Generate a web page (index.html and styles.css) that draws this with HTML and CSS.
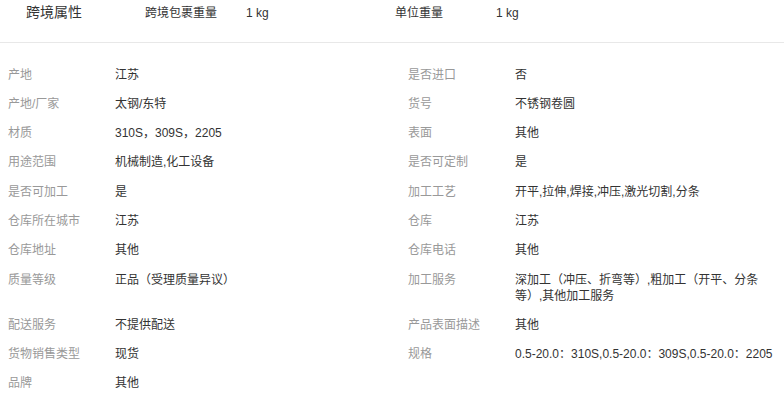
FILE: index.html
```html
<!DOCTYPE html>
<html lang="zh-CN">
<head>
    <meta charset="UTF-8">
    <meta name="viewport" content="width=device-width, initial-scale=1.0">
    <title>商品属性</title>
    <link rel="stylesheet" href="styles.css">
</head>
<body>

    <!-- 跨境属性 -->
    <div class="cross-border">
        <div class="cb-title">跨境属性</div>
        <div class="cb-item">
            <span class="cb-label">跨境包裹重量</span>
            <span class="cb-value">1 kg</span>
        </div>
        <div class="cb-item">
            <span class="cb-label">单位重量</span>
            <span class="cb-value">1 kg</span>
        </div>
    </div>

    <!-- 商品属性列表 -->
    <div class="attr-list">
        <div class="attr"><span class="attr-name">产地</span><span class="attr-value">江苏</span></div>
        <div class="attr"><span class="attr-name">是否进口</span><span class="attr-value">否</span></div>

        <div class="attr"><span class="attr-name">产地/厂家</span><span class="attr-value">太钢/东特</span></div>
        <div class="attr"><span class="attr-name">货号</span><span class="attr-value">不锈钢卷圆</span></div>

        <div class="attr"><span class="attr-name">材质</span><span class="attr-value">310S，309S，2205</span></div>
        <div class="attr"><span class="attr-name">表面</span><span class="attr-value">其他</span></div>

        <div class="attr"><span class="attr-name">用途范围</span><span class="attr-value">机械制造,化工设备</span></div>
        <div class="attr"><span class="attr-name">是否可定制</span><span class="attr-value">是</span></div>

        <div class="attr"><span class="attr-name">是否可加工</span><span class="attr-value">是</span></div>
        <div class="attr"><span class="attr-name">加工工艺</span><span class="attr-value">开平,拉伸,焊接,冲压,激光切割,分条</span></div>

        <div class="attr"><span class="attr-name">仓库所在城市</span><span class="attr-value">江苏</span></div>
        <div class="attr"><span class="attr-name">仓库</span><span class="attr-value">江苏</span></div>

        <div class="attr"><span class="attr-name">仓库地址</span><span class="attr-value">其他</span></div>
        <div class="attr"><span class="attr-name">仓库电话</span><span class="attr-value">其他</span></div>

        <div class="attr"><span class="attr-name">质量等级</span><span class="attr-value">正品（受理质量异议）</span></div>
        <div class="attr"><span class="attr-name">加工服务</span><span class="attr-value">深加工（冲压、折弯等）,粗加工（开平、分条等）,其他加工服务</span></div>

        <div class="attr"><span class="attr-name">配送服务</span><span class="attr-value">不提供配送</span></div>
        <div class="attr"><span class="attr-name">产品表面描述</span><span class="attr-value">其他</span></div>

        <div class="attr"><span class="attr-name">货物销售类型</span><span class="attr-value">现货</span></div>
        <div class="attr"><span class="attr-name">规格</span><span class="attr-value">0.5-20.0：310S,0.5-20.0：309S,0.5-20.0：2205</span></div>

        <div class="attr"><span class="attr-name">品牌</span><span class="attr-value">其他</span></div>
    </div>

</body>
</html>
```

FILE: styles.css
```css
body {
    font-family: "Liberation Sans", "Noto Sans CJK SC", sans-serif;
    font-size: 12px;
    color: #333;
    background-color: #fff;
    margin: 0;
}

.cross-border {
    display: flex;
    height: 43px;
    padding: 4px 0 0 26px;
    box-sizing: border-box;
    border-bottom: 1px solid #e8e8e8;
}

.cb-title {
    width: 119px;
    font-size: 14px;
    line-height: 16px;
}

.cb-item {
    display: flex;
    width: 250px;
    line-height: 16px;
    padding-top: 1px;
}

.cb-label {
    width: 101px;
}

.attr-list {
    display: grid;
    grid-template-columns: 400px 1fr;
    padding: 17px 0 0 8px;
}

.attr {
    display: grid;
    grid-template-columns: 107px 1fr;
    padding: 6.65px 8px 6.65px 0;
    line-height: 16px;
}

.attr-name {
    color: #999;
}

.attr-value {
    color: #333;
}
```
